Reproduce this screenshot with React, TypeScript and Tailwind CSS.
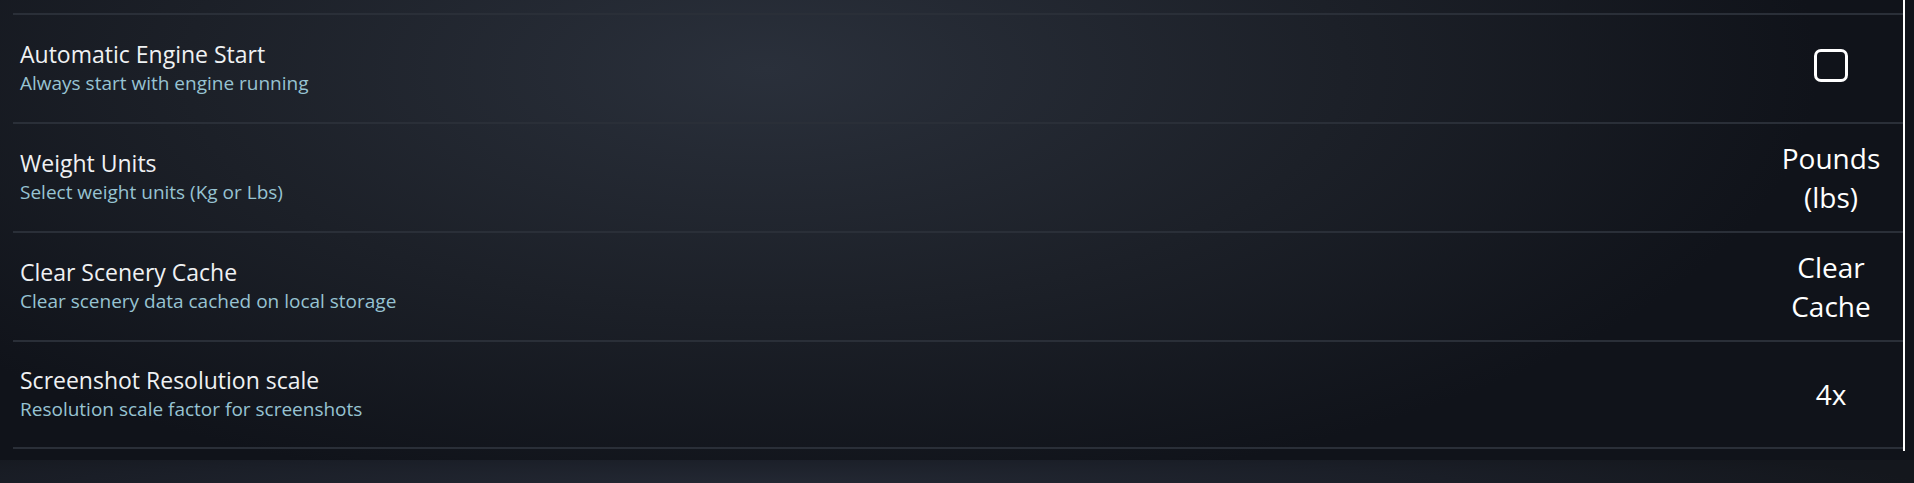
const settings = [
    {
        title: "Automatic Engine Start",
        description: "Always start with engine running",
        kind: "checkbox" as const,
    },
    {
        title: "Weight Units",
        description: "Select weight units (Kg or Lbs)",
        kind: "value" as const,
        value: "Pounds (lbs)",
    },
    {
        title: "Clear Scenery Cache",
        description: "Clear scenery data cached on local storage",
        kind: "value" as const,
        value: "Clear Cache",
    },
    {
        title: "Screenshot Resolution scale",
        description: "Resolution scale factor for screenshots",
        kind: "value" as const,
        value: "4x",
    },
];

export default function App() {
    return (
        <div className="w-[1914px] h-[483px] overflow-hidden flex flex-col bg-[#12151b] font-['Open_Sans',sans-serif]">
            <div className="h-[460px] flex bg-[radial-gradient(ellipse_55%_95%_at_40%_15%,#2a303b_0%,#1c2028_55%,#10131a_100%)]">
                <div className="ml-[13px] w-[1892px] h-[451px] border-r-2 border-white pt-[13px] flex flex-col">
                    {settings.map((s, i) => (
                        <div
                            key={s.title}
                            className={`h-[109px] flex items-center justify-between pl-[7px] border-t-2 border-[#2a2f38] ${i === settings.length - 1 ? "border-b-2" : ""
                                }`}
                        >
                            <div className="flex flex-col mb-[3px]">
                                <span className="text-[23px] leading-[32px] text-[#eff1f3]">
                                    {s.title}
                                </span>
                                <span className="text-[19px] leading-[27px] text-[#97c3d2]">
                                    {s.description}
                                </span>
                            </div>
                            <div className="w-[120px] mr-[12px] flex justify-center text-center text-[28px] leading-[39px] text-white">
                                {s.kind === "checkbox" ? (
                                    <div className="w-[34px] h-[33px] -mt-[6px] rounded-[7px] border-[3px] border-white" />
                                ) : (
                                    <span>{s.value}</span>
                                )}
                            </div>
                        </div>
                    ))}
                </div>
            </div>
            <div className="h-[23px] bg-[radial-gradient(ellipse_60%_200%_at_40%_100%,#232833_0%,#1a1e27_60%,#14171d_100%)]" />
        </div>
    );
}
